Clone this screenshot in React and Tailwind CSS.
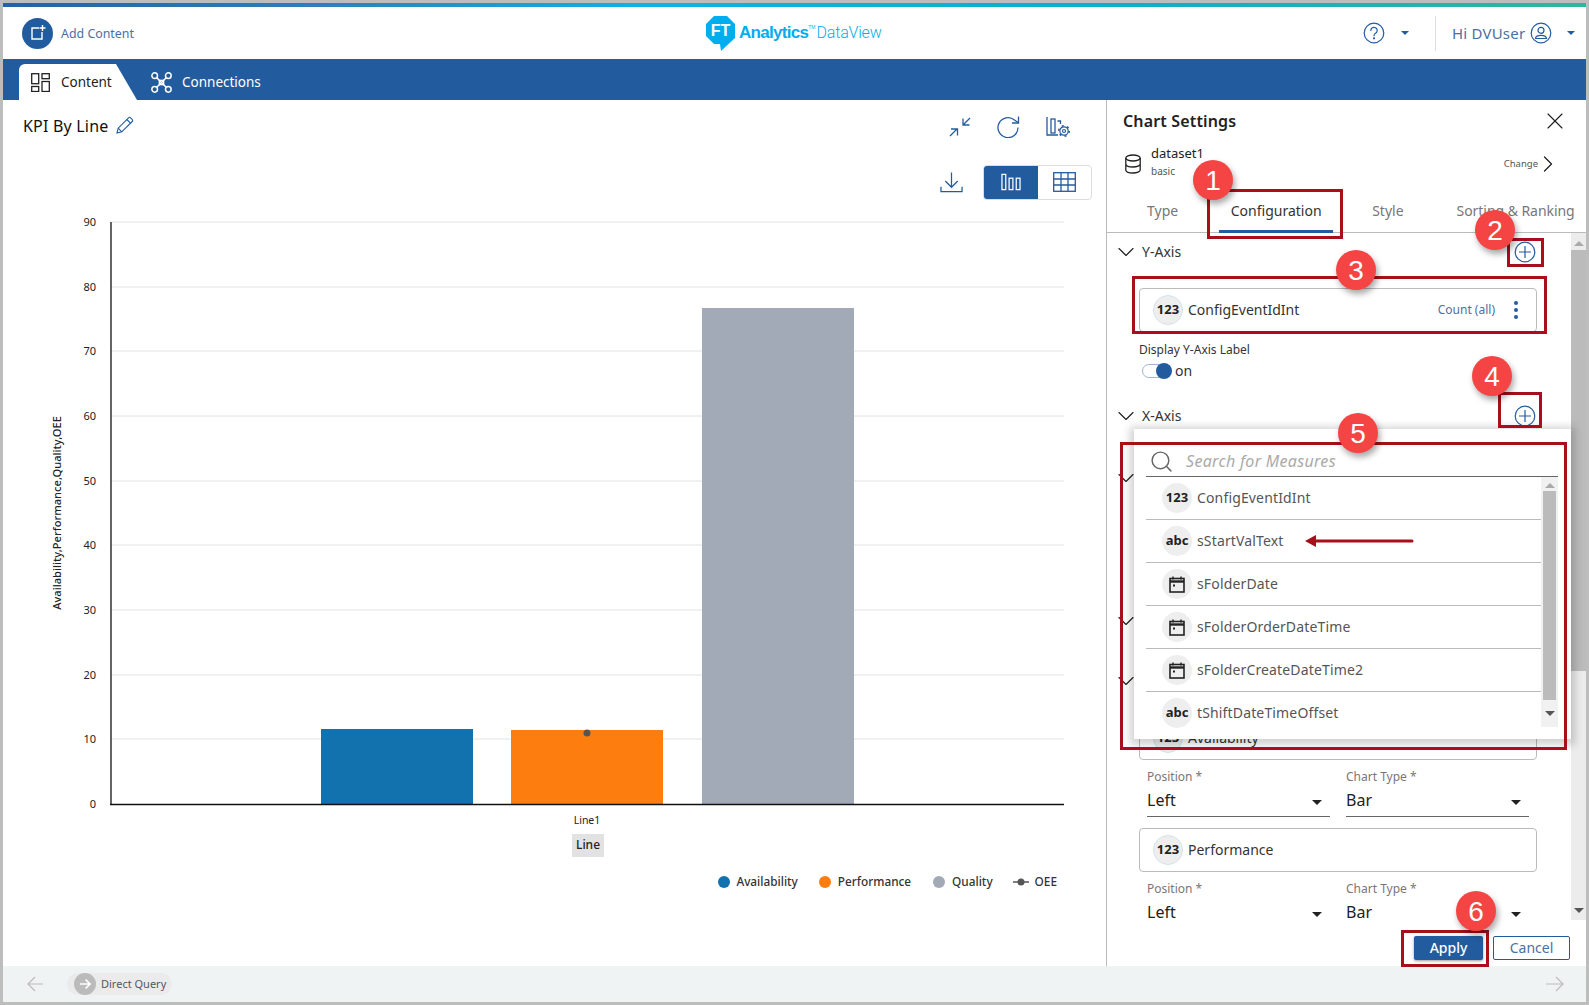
import { ChevronDown, ChevronRight, Search, X } from "lucide-react";

const ticks = [
  { label: "90", y: 222 },
  { label: "80", y: 287 },
  { label: "70", y: 351 },
  { label: "60", y: 416 },
  { label: "50", y: 481 },
  { label: "40", y: 545 },
  { label: "30", y: 610 },
  { label: "20", y: 675 },
  { label: "10", y: 739 },
];

const measures = [
  { type: "123", name: "ConfigEventIdInt" },
  { type: "abc", name: "sStartValText" },
  { type: "date", name: "sFolderDate" },
  { type: "date", name: "sFolderOrderDateTime" },
  { type: "date", name: "sFolderCreateDateTime2" },
  { type: "abc", name: "tShiftDateTimeOffset" },
];

function Caret({ className }) {
  return <span className={`h-0 w-0 border-x-[5px] border-t-[5px] border-x-transparent ${className}`} />;
}

function PlusCircle() {
  return (
    <svg width="22" height="22" viewBox="0 0 22 22" fill="none" stroke="#225c9e" strokeWidth="1.2">
      <circle cx="11" cy="11" r="9.8" />
      <path d="M11 5v12M5 11h12" />
    </svg>
  );
}

function CalendarIcon() {
  return (
    <svg width="16" height="17" viewBox="0 0 16 17" fill="none" stroke="#222">
      <path d="M4 0.5v3M12 0.5v3" strokeWidth="1.4" />
      <rect x="1" y="2.5" width="14" height="13.5" strokeWidth="1.6" />
      <path d="M1 5.5h14" strokeWidth="2.4" />
      <rect x="4" y="8.5" width="2" height="2" fill="#222" stroke="none" />
    </svg>
  );
}

function TypeBadge({ type, ring }) {
  return (
    <span className={`flex h-[30px] w-[30px] shrink-0 items-center justify-center rounded-full bg-[#eeeeee] text-[13px] font-bold text-[#222] ${ring ? "border border-[#d3e3ee]" : ""}`}>
      {type === "date" ? <CalendarIcon /> : type}
    </span>
  );
}

function FieldCard({ name, children }) {
  return (
    <div className="ml-[32px] mr-[34px] flex h-[44px] items-center rounded-[4px] border border-[#bbbbbb] pl-[13px]">
      <TypeBadge type="123" ring />
      <span className="ml-[5px] pb-[2px] text-[14px] text-[#333]">{name}</span>
      {children}
    </div>
  );
}

function SelectField({ label, value }) {
  return (
    <div className="w-[183px]">
      <div className="h-[16px] text-[12px] leading-[16px] text-[#777]">{label} *</div>
      <div className="flex h-[32px] items-center justify-between border-b border-[#666] pb-[2px] pr-[8px] text-[16px] text-[#222]">
        {value}
        <Caret className="mt-[5px] border-t-[#222]" />
      </div>
    </div>
  );
}

function SectionRow({ label, children, className = "" }) {
  return (
    <div className={`flex h-[38px] items-center pl-[5px] pr-[35px] ${className}`}>
      <ChevronDown size={28} strokeWidth={1} className="text-[#222]" />
      <span className="ml-[2px] pb-[2px] text-[14px] text-[#333]">{label}</span>
      <span className="ml-auto flex">{children}</span>
    </div>
  );
}

function Callout({ className, children }) {
  return (
    <div className={`absolute flex h-[40px] w-[40px] items-center justify-center rounded-full bg-[#f44444] pt-[1px] font-['Liberation_Sans',sans-serif] text-[28px] text-white shadow-[2px_4px_6px_rgba(0,0,0,0.35)] ${className}`}>
      {children}
    </div>
  );
}

function Chart() {
  return (
    <svg width="1103" height="660" viewBox="3 205 1103 660" className="block">
      {ticks.map((t) => (
        <g key={t.label}>
          <line x1="111" x2="1064" y1={t.y} y2={t.y} stroke="#e2e2e2" />
          <text x="96" y={t.y + 4} textAnchor="end" fontSize="11" fill="#222">{t.label}</text>
        </g>
      ))}
      <text x="96" y="808" textAnchor="end" fontSize="11" fill="#222">0</text>
      <rect x="321" y="729" width="152" height="75" fill="#1172ad" />
      <rect x="511" y="730" width="152" height="74" fill="#fd7e0f" />
      <rect x="702" y="308" width="152" height="496" fill="#a3aab7" />
      <circle cx="587" cy="733" r="3.5" fill="#555" />
      <line x1="111" x2="111" y1="222" y2="805" stroke="#111" strokeWidth="1.3" />
      <line x1="110" x2="1064" y1="804.5" y2="804.5" stroke="#111" strokeWidth="1.3" />
      <text x="587" y="824" textAnchor="middle" fontSize="10.5" fill="#222">Line1</text>
      <rect x="572" y="834" width="32" height="23" fill="#e2e2e2" />
      <text x="588" y="849" textAnchor="middle" fontSize="12" fontWeight="500" fill="#222">Line</text>
      <text transform="translate(61 513) rotate(-90)" textAnchor="middle" fontSize="11.15" fontWeight="500" fill="#222">Availability,Performance,Quality,OEE</text>
    </svg>
  );
}

export default function App() {
  return (
    <div className="relative flex h-[1005px] w-[1589px] flex-col overflow-hidden bg-[#bdbdbd] p-[3px] font-['Noto_Sans',sans-serif]">
      <div className="h-[4px] shrink-0 bg-[linear-gradient(90deg,#2660a5_0%,#2b80bd_20%,#0db1e8_40%,#0bb0c8_70%,#2cb89a_100%)]" />

      {/* header */}
      <div className="flex h-[52px] shrink-0 items-center bg-white">
        <div className="ml-[19px] flex h-[31px] w-[31px] items-center justify-center rounded-full bg-[#225c9e]">
          <svg width="16" height="16" viewBox="0 0 16 16" fill="none" stroke="#fff" strokeWidth="1.4">
            <path d="M9 3H2v11h10V7" />
            <path d="M12.5 0v6M9.5 3h6" />
          </svg>
        </div>
        <span className="ml-[8px] mt-[2px] w-[75px] whitespace-nowrap text-[12.4px] text-[#4c6fa3]">Add Content</span>
        <div className="ml-[570px] flex h-[36px] w-[180px] items-center">
          <svg width="30" height="35" viewBox="0 0 30 35" className="shrink-0">
            <polygon points="8,0 21,0 29,8 29,22 16,34 15,35 14,28 8,28 0,20 0,8" fill="#00aeef" />
            <text x="14.5" y="20" textAnchor="middle" fontSize="16" fontWeight="700" fill="#fff" fontFamily="Liberation Sans">FT</text>
          </svg>
          <span className="ml-[3px] font-['Liberation_Sans',sans-serif] text-[17px] font-bold tracking-[-0.7px] text-[#00aeef]">Analytics</span>
          <span className="mt-[9px] self-start font-['Liberation_Sans',sans-serif] text-[5px] text-[#00aeef]">TM</span>
          <span className="ml-[1px] font-['Roboto',sans-serif] text-[16px] font-light tracking-[-0.2px] text-[#00aeef]">DataView</span>
        </div>
        <svg width="22" height="22" viewBox="0 0 22 22" fill="none" stroke="#225c9e" strokeWidth="1.2" className="ml-[477px]">
          <circle cx="11" cy="11" r="9.8" />
          <path d="M7.8 8.5a3.2 3.2 0 1 1 4.8 2.8c-1 .6-1.6 1.2-1.6 2.4" strokeLinecap="round" />
          <circle cx="11" cy="16.3" r="0.5" fill="#225c9e" />
        </svg>
        <Caret className="ml-[16px] border-t-[#225c9e] !border-x-[4px] !border-t-[4px]" />
        <div className="ml-[26px] h-[35px] w-px bg-[#dddddd]" />
        <span className="ml-[16px] text-[15px] tracking-[0.2px] text-[#4c6fa3]">Hi DVUser</span>
        <svg width="22" height="22" viewBox="0 0 22 22" fill="none" stroke="#225c9e" strokeWidth="1.2" className="ml-[5px]">
          <circle cx="11" cy="11" r="9.8" />
          <circle cx="11" cy="8.3" r="3" />
          <path d="M5.5 16.5c0-2.2 2-3.2 5.500-3.200s5.500 1 5.500 3.200z" />
        </svg>
        <Caret className="ml-[15px] border-t-[#225c9e] !border-x-[4px] !border-t-[4px]" />
      </div>

      {/* nav */}
      <div className="flex h-[41px] shrink-0 items-end bg-[#225c9e] pl-[16px]">
        <div className="flex h-[36px] w-[118px] items-center rounded-tl-[6px] bg-white pl-[12px] [clip-path:polygon(0_0,97px_0,100%_100%,0_100%)]">
          <svg width="19" height="19" viewBox="0 0 19 19" fill="none" stroke="#222" strokeWidth="1.3">
            <rect x="0.700" y="0.700" width="7" height="10" />
            <rect x="0.700" y="13.500" width="7" height="5" />
            <rect x="11" y="0.700" width="7.300" height="5" />
            <rect x="11" y="8.500" width="7.300" height="10" />
          </svg>
          <span className="ml-[11px] mt-[1px] text-[13.5px] text-[#222]">Content</span>
        </div>
        <div className="ml-[14px] flex h-[36px] items-center text-white">
          <svg width="21" height="21" viewBox="0 0 20 20" fill="none" stroke="#fff" strokeWidth="1.4">
            <circle cx="3.500" cy="3.500" r="2.700" />
            <circle cx="16.500" cy="3.500" r="2.700" />
            <circle cx="3.500" cy="16.500" r="2.700" />
            <circle cx="16.500" cy="16.500" r="2.700" />
            <path d="M5.500 5.500l9 9M14.500 5.500l-9 9" />
            <rect x="8" y="8" width="4" height="4" />
          </svg>
          <span className="ml-[10px] mt-[1px] text-[13.5px]">Connections</span>
        </div>
      </div>

      {/* main */}
      <div className="flex min-h-0 flex-1 bg-white">
        <div className="w-[1103px] shrink-0">
          <div className="flex h-[52px] items-center pl-[20px]">
            <span className="text-[16px] tracking-[0.2px] text-[#111]">KPI By Line</span>
            <svg width="18" height="18" viewBox="0 0 18 18" fill="none" stroke="#225c9e" strokeWidth="1.100" className="ml-[7px] mb-[2px]">
              <path d="M1 17l1.200-4.800L12.500 1.800a1.500 1.500 0 0 1 2.100 0l1.600 1.600a1.500 1.500 0 0 1 0 2.100L5.800 15.800z" />
              <path d="M10.800 3.500l3.700 3.700M2.200 12.200l3.600 3.600" />
            </svg>
            <svg width="22" height="20" viewBox="0 0 22 20" fill="none" stroke="#225c9e" strokeWidth="1.300" className="ml-[815px] mt-[2px]">
              <path d="M1 19l7-7M2 12h6.500v6.500" />
              <path d="M21 1l-7 7M20.500 8H14V1.500" />
            </svg>
            <svg width="24" height="22" viewBox="0 0 24 22" fill="none" stroke="#225c9e" strokeWidth="1.300" className="ml-[25px] mt-[2px]">
              <path d="M22 11.500A10 10 0 1 1 18.500 4L22 6.500" />
              <path d="M22.500 0.500V7H16" />
            </svg>
            <svg width="25" height="22" viewBox="0 0 25 22" fill="none" stroke="#225c9e" className="ml-[26px] mt-[2px]">
              <path d="M1 1v18h11" strokeWidth="1.300" />
              <rect x="5" y="3" width="4" height="14" strokeWidth="1.300" />
              <path d="M11.500 5h3v3" strokeWidth="1.300" />
              <circle cx="18" cy="15" r="1.500" strokeWidth="1.200" />
              <circle cx="18" cy="15" r="4.200" strokeWidth="1.200" />
              <circle cx="18" cy="15" r="5.300" strokeWidth="1.500" strokeDasharray="2 3.500" />
            </svg>
          </div>
          <div className="flex h-[53px] items-center justify-end pr-[14px] pt-[7px]">
            <svg width="23" height="21" viewBox="0 0 24 21" fill="none" stroke="#225c9e" strokeWidth="1.300" className="mr-[20px]">
              <path d="M12 0v15M5.500 9l6.500 6.500L18.500 9" />
              <path d="M1 15v5h22v-5" />
            </svg>
            <div className="flex h-[35px] w-[109px] overflow-hidden rounded-[4px] border border-[#dddddd]">
              <div className="flex w-[54px] items-center justify-center bg-[#225c9e]">
                <svg width="20" height="18" viewBox="0 0 21 18" fill="none" stroke="#fff" strokeWidth="1.300">
                  <rect x="1" y="1" width="4" height="16" />
                  <rect x="8.500" y="5" width="4" height="12" />
                  <rect x="16" y="5" width="4" height="12" />
                </svg>
              </div>
              <div className="flex flex-1 items-center justify-center">
                <svg width="23" height="20" viewBox="0 0 23 20" fill="none" stroke="#225c9e" strokeWidth="1.300">
                  <rect x="0.700" y="0.700" width="21.600" height="18.600" />
                  <path d="M0.700 7h21.600M0.700 13h21.600M8 0.700v18.600M15 0.700v18.600" />
                </svg>
              </div>
            </div>
          </div>
          <Chart />
          <div className="mt-[9px] flex h-[16px] items-center justify-end pr-[49px] text-[11.8px] font-medium text-[#333]">
            <span className="h-[12px] w-[12px] rounded-full bg-[#1172ad]" />
            <span className="ml-[6px]">Availability</span>
            <span className="ml-[21px] h-[12px] w-[12px] rounded-full bg-[#fd7e0f]" />
            <span className="ml-[7px]">Performance</span>
            <span className="ml-[22px] h-[12px] w-[12px] rounded-full bg-[#a3aab7]" />
            <span className="ml-[7px]">Quality</span>
            <svg width="16" height="8" viewBox="0 0 16 8" className="ml-[20px]">
              <path d="M0 4h16" stroke="#555" strokeWidth="1.500" />
              <circle cx="8" cy="4" r="3.500" fill="#555" />
            </svg>
            <span className="ml-[6px]">OEE</span>
          </div>
        </div>

        {/* chart settings */}
        <div className="flex w-[480px] shrink-0 flex-col border-l border-[#bbbbbb]">
          <div className="flex h-[42px] items-center pl-[16px] pr-[17px]">
            <span className="text-[16px] font-semibold tracking-[0.15px] text-[#222]">Chart Settings</span>
            <X size={28} strokeWidth={1} className="ml-auto text-[#222]" />
          </div>
          <div className="flex h-[44px] items-center pl-[18px] pr-[24px]">
            <svg width="16" height="20" viewBox="0 0 16 20" fill="none" stroke="#222" strokeWidth="1.300">
              <ellipse cx="8" cy="4" rx="7.200" ry="3" />
              <path d="M0.800 4v12c0 1.700 3.200 3 7.200 3s7.200-1.300 7.200-3V4M0.800 10c0 1.700 3.200 3 7.200 3s7.200-1.300 7.200-3" />
            </svg>
            <div className="ml-[10px] flex flex-col pb-[3px]">
              <span className="text-[13px] leading-[16px] text-[#222]">dataset1</span>
              <span className="text-[10px] leading-[20px] text-[#555]">basic</span>
            </div>
            <span className="ml-auto text-[9.5px] text-[#555]">Change</span>
            <ChevronRight size={28} strokeWidth={1.100} className="-ml-[4px] text-[#222]" />
          </div>
          <div className="flex h-[47px] shrink-0 border-b border-[#bbbbbb] pl-[40px] text-[14px] text-[#777]">
            <span className="mt-[14px]">Type</span>
            <span className="ml-[41px] flex h-[47px] w-[114px] justify-center border-b-[3px] border-[#225c9e] pt-[14px] text-[#333]">Configuration</span>
            <span className="ml-[39px] mt-[14px]">Style</span>
            <span className="ml-[53px] mt-[14px] tracking-[-0.05px]">Sorting &amp; Ranking</span>
          </div>

          <div className="flex h-[687px] shrink-0 overflow-hidden">
            <div className="min-w-0 flex-1">
              <SectionRow label="Y-Axis"><PlusCircle /></SectionRow>
              <div className="mt-[17px]">
                <FieldCard name="ConfigEventIdInt">
                  <span className="ml-auto pb-[1px] text-[12px] text-[#4c6fa3]">Count (all)</span>
                  <span className="ml-[19px] mr-[18px] flex flex-col gap-[3px]">
                    <span className="h-[4px] w-[4px] rounded-full bg-[#225c9e]" />
                    <span className="h-[4px] w-[4px] rounded-full bg-[#225c9e]" />
                    <span className="h-[4px] w-[4px] rounded-full bg-[#225c9e]" />
                  </span>
                </FieldCard>
              </div>
              <div className="ml-[32px] mt-[9px] text-[12px] leading-[18px] text-[#333]">Display Y-Axis Label</div>
              <div className="ml-[35px] mt-[2px] flex h-[20px] items-center">
                <span className="flex h-[14px] w-[28px] items-center justify-end rounded-full border border-[#9db6d3] bg-white">
                  <span className="-mr-[3px] h-[16px] w-[16px] shrink-0 rounded-full bg-[#225c9e]" />
                </span>
                <span className="ml-[5px] pb-[2px] text-[14px] text-[#333]">on</span>
              </div>
              <SectionRow label="X-Axis" className="mt-[16px]"><PlusCircle /></SectionRow>
              <SectionRow className="mt-[24px]" />
              <SectionRow className="mt-[105px]" />
              <SectionRow className="mt-[22px]" />
              <div className="mt-[16px]"><FieldCard name="Availability" /></div>
              <div className="ml-[40px] mt-[9px] flex gap-[16px]">
                <SelectField label="Position" value="Left" />
                <SelectField label="Chart Type" value="Bar" />
              </div>
              <div className="mt-[11px]"><FieldCard name="Performance" /></div>
              <div className="ml-[40px] mt-[9px] flex gap-[16px]">
                <SelectField label="Position" value="Left" />
                <SelectField label="Chart Type" value="Bar" />
              </div>
            </div>
            <div className="flex w-[15px] shrink-0 flex-col items-center bg-[#ececec]">
              <Caret className="mt-[8px] !border-t-0 !border-b-[5px] border-b-[#aaaaaa]" />
              <div className="mt-[4px] h-[421px] w-full bg-[#bbbbbb]" />
              <Caret className="mt-[237px] border-t-[#555]" />
            </div>
          </div>

          <div className="flex flex-1 justify-end gap-[10px] pr-[16px] pt-[16px]">
            <div className="flex h-[24px] w-[69px] items-center justify-center rounded-[2px] bg-[#225c9e] pb-[2px] text-[14px] font-medium text-white shadow-[0_1px_3px_rgba(0,0,0,0.4)]">Apply</div>
            <div className="flex h-[24px] w-[77px] items-center justify-center rounded-[2px] border border-[#225c9e] pb-[2px] text-[14px] text-[#4c6fa3]">Cancel</div>
          </div>
        </div>
      </div>

      {/* bottom bar */}
      <div className="flex h-[36px] shrink-0 items-center bg-[#f0f3f4] pl-[24px] pr-[22px]">
        <svg width="16" height="16" viewBox="0 0 16 16" fill="none" stroke="#bbbbbb" strokeWidth="1.200">
          <path d="M16 8H1M8 1L1 8l7 7" />
        </svg>
        <div className="ml-[24px] flex h-[22px] w-[105px] items-center rounded-full bg-[#ebebeb] pl-[7px]">
          <span className="flex h-[22px] w-[22px] items-center justify-center rounded-full bg-[#bbbbbb]">
            <svg width="12" height="12" viewBox="0 0 12 12" fill="none" stroke="#fff" strokeWidth="1.600">
              <path d="M1 6h10M6.500 1.500L11 6l-4.500 4.500" />
            </svg>
          </span>
          <span className="ml-[5px] text-[11px] text-[#556]">Direct Query</span>
        </div>
        <svg width="18" height="16" viewBox="0 0 18 16" fill="none" stroke="#bbbbbb" strokeWidth="1.200" className="ml-auto">
          <path d="M0 8h17M10 1l7 7-7 7" />
        </svg>
      </div>

      {/* measures dropdown */}
      <div className="absolute left-[1134px] top-[429px] h-[310px] w-[437px] bg-white shadow-[0_2px_8px_4px_rgba(0,0,0,0.18)]">
        <div className="ml-[12px] mr-[13px] mt-[18px] flex h-[30px] items-center border-b border-[#666]">
          <Search size={25} strokeWidth={1.400} className="ml-[3px] text-[#666]" />
          <span className="ml-[12px] pb-[2px] text-[16px] italic tracking-[0.3px] text-[#aaaaaa]">Search for Measures</span>
        </div>
        <div className="ml-[12px] mr-[13px] flex h-[250px]">
          <div className="flex-1">
            {measures.map((m, i) => (
              <div key={m.name} className={`flex h-[43px] items-center border-b pl-[16px] ${i < 5 ? "border-[#bbbbbb]" : "border-transparent"}`}>
                <TypeBadge type={m.type} />
                <span className="ml-[5px] pb-[1px] text-[14px] tracking-[0.15px] text-[#555]">{m.name}</span>
              </div>
            ))}
          </div>
          <div className="flex w-[17px] shrink-0 flex-col items-center bg-[#f1f1f1]">
            <Caret className="mt-[6px] !border-t-0 !border-b-[5px] border-b-[#aaaaaa]" />
            <div className="mt-[3px] h-[209px] w-[13px] bg-[#bbbbbb]" />
            <Caret className="mt-[11px] border-t-[#555]" />
          </div>
        </div>
      </div>

      {/* annotations */}
      <div className="absolute left-[1207px] top-[189px] h-[50px] w-[136px] border-[3px] border-[#a80f1b]" />
      <div className="absolute left-[1507px] top-[238px] h-[29px] w-[37px] border-[3px] border-[#a80f1b]" />
      <div className="absolute left-[1132px] top-[276px] h-[58px] w-[415px] border-[3px] border-[#a80f1b]" />
      <div className="absolute left-[1498px] top-[392px] h-[36px] w-[44px] border-[3px] border-[#a80f1b]" />
      <div className="absolute left-[1120px] top-[442px] h-[308px] w-[447px] border-[3px] border-[#a80f1b]" />
      <div className="absolute left-[1401px] top-[930px] h-[37px] w-[88px] border-[3px] border-[#a80f1b]" />
      <Callout className="left-[1193px] top-[160px]">1</Callout>
      <Callout className="left-[1475px] top-[210px]">2</Callout>
      <Callout className="left-[1336px] top-[250px]">3</Callout>
      <Callout className="left-[1472px] top-[356px]">4</Callout>
      <Callout className="left-[1338px] top-[413px]">5</Callout>
      <Callout className="left-[1456px] top-[891px]">6</Callout>
      <svg width="110" height="14" viewBox="0 0 110 14" className="absolute left-[1304px] top-[534px]">
        <path d="M1 7l11-6v4.500h96a1.500 1.500 0 0 1 0 3H12v4.500z" fill="#a80f1b" />
      </svg>
    </div>
  );
}
